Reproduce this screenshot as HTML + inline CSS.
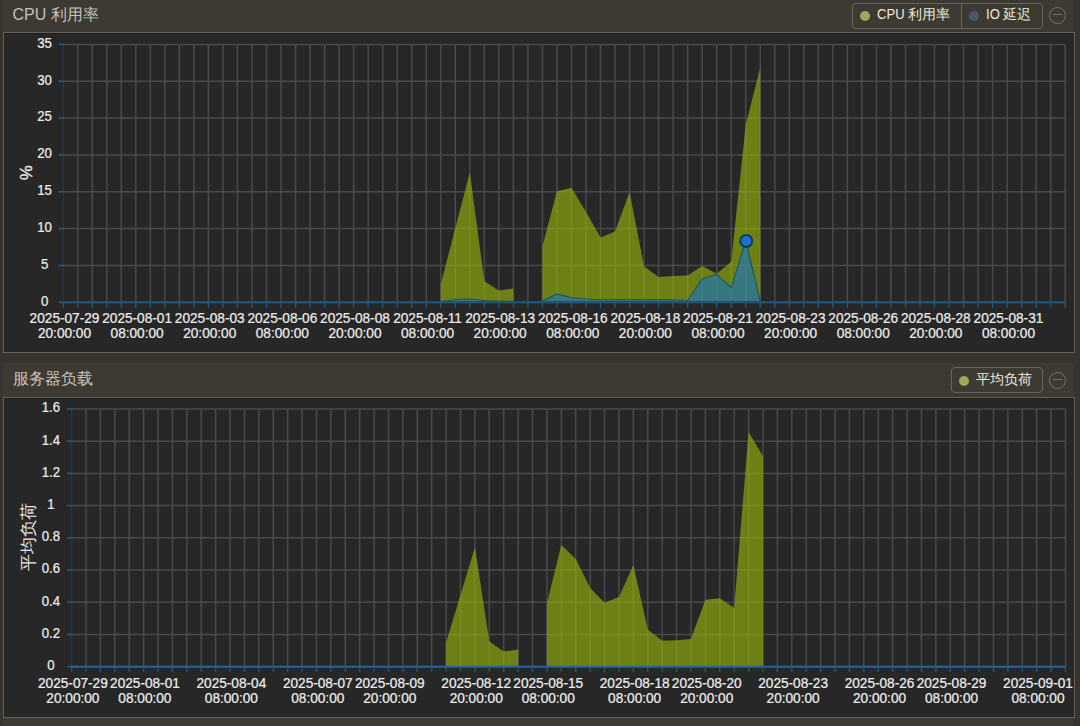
<!DOCTYPE html>
<html><head><meta charset="utf-8">
<style>
html,body{margin:0;padding:0;}
body{width:1080px;height:726px;overflow:hidden;background:#37332e;font-family:"Liberation Sans",sans-serif;position:relative;}
.hdr{position:absolute;left:3px;width:1071px;background:#3d3a34;}
.plot{position:absolute;left:3px;width:1070px;background:#272727;border:1px solid #66615a;box-sizing:content-box;box-shadow:inset 0 1px 0 #201d1b;}
.title{position:absolute;left:12.5px;font-size:16px;color:#c4c1b9;white-space:nowrap;}
.legend{position:absolute;height:24px;border:1px solid #6a645a;border-radius:4px;box-sizing:border-box;}
.li{position:absolute;top:0;height:22px;line-height:22px;font-size:13.5px;color:#f0ead8;white-space:nowrap;}
.dot{position:absolute;width:10px;height:10px;border-radius:50%;top:6px;}
.sep{position:absolute;top:0;width:1px;height:24px;background:#6a645a;}
.lat{display:inline-block;font-size:15px;transform:scaleX(0.87);transform-origin:0 0;}
.minus{position:absolute;width:15px;height:15px;border:1.3px solid #77716a;border-radius:50%;box-sizing:border-box;}
.minus:after{content:"";position:absolute;left:3px;right:3px;top:6px;height:1.3px;background:#77716a;}
svg{position:absolute;left:0;top:0;}
.ax{font-size:15px;fill:#ececec;stroke:#ececec;stroke-width:0.25px;}
.yn{font-size:16.6px;fill:#e6e6e6;}
</style></head><body>
<div class="hdr" style="top:0;height:33px;"></div>
<div class="plot" style="top:32px;height:319px;"></div>
<div class="hdr" style="top:363px;height:35px;"></div>
<div class="plot" style="top:397px;height:319px;"></div>
<div class="hdr" style="top:718px;height:8px;"></div>
<div class="title" style="top:5px;">CPU 利用率</div>
<div class="legend" style="left:852px;top:3px;width:191px;height:26px;">
  <div class="dot" style="left:7px;top:7px;background:#a0a55c;"></div>
  <div class="li" style="left:24px;top:-1px;"><span class="lat" style="margin-right:-4.1px">CPU</span> 利用率</div>
  <div class="sep" style="left:107.6px;"></div>
  <div class="dot" style="left:116.4px;top:7.3px;background:#485769;"></div>
  <div class="li" style="left:132.6px;top:-1px;"><span class="lat" style="margin-right:-2px">IO</span> 延迟</div>
</div>
<div class="minus" style="left:1049px;top:7px;width:17px;height:17px;"></div>
<div class="title" style="top:369px;">服务器负载</div>
<div class="legend" style="left:951px;top:367px;width:92px;height:26px;">
  <div class="dot" style="left:7px;top:8px;background:#a0a55c;"></div>
  <div class="li" style="left:24px;top:1px;">平均负荷</div>
</div>
<div class="minus" style="left:1049px;top:372px;width:17px;height:17px;"></div>
<svg width="1080" height="726" viewBox="0 0 1080 726">
<line x1="77.72" y1="44.4" x2="77.72" y2="302.3" stroke="#4a4a4a" stroke-width="1.5"/>
<line x1="92.24" y1="44.4" x2="92.24" y2="302.3" stroke="#4a4a4a" stroke-width="1.5"/>
<line x1="106.77" y1="44.4" x2="106.77" y2="302.3" stroke="#4a4a4a" stroke-width="1.5"/>
<line x1="121.29" y1="44.4" x2="121.29" y2="302.3" stroke="#4a4a4a" stroke-width="1.5"/>
<line x1="135.81" y1="44.4" x2="135.81" y2="302.3" stroke="#4a4a4a" stroke-width="1.5"/>
<line x1="150.33" y1="44.4" x2="150.33" y2="302.3" stroke="#4a4a4a" stroke-width="1.5"/>
<line x1="164.85" y1="44.4" x2="164.85" y2="302.3" stroke="#4a4a4a" stroke-width="1.5"/>
<line x1="179.38" y1="44.4" x2="179.38" y2="302.3" stroke="#4a4a4a" stroke-width="1.5"/>
<line x1="193.9" y1="44.4" x2="193.9" y2="302.3" stroke="#4a4a4a" stroke-width="1.5"/>
<line x1="208.42" y1="44.4" x2="208.42" y2="302.3" stroke="#4a4a4a" stroke-width="1.5"/>
<line x1="222.94" y1="44.4" x2="222.94" y2="302.3" stroke="#4a4a4a" stroke-width="1.5"/>
<line x1="237.46" y1="44.4" x2="237.46" y2="302.3" stroke="#4a4a4a" stroke-width="1.5"/>
<line x1="251.99" y1="44.4" x2="251.99" y2="302.3" stroke="#4a4a4a" stroke-width="1.5"/>
<line x1="266.51" y1="44.4" x2="266.51" y2="302.3" stroke="#4a4a4a" stroke-width="1.5"/>
<line x1="281.03" y1="44.4" x2="281.03" y2="302.3" stroke="#4a4a4a" stroke-width="1.5"/>
<line x1="295.55" y1="44.4" x2="295.55" y2="302.3" stroke="#4a4a4a" stroke-width="1.5"/>
<line x1="310.07" y1="44.4" x2="310.07" y2="302.3" stroke="#4a4a4a" stroke-width="1.5"/>
<line x1="324.6" y1="44.4" x2="324.6" y2="302.3" stroke="#4a4a4a" stroke-width="1.5"/>
<line x1="339.12" y1="44.4" x2="339.12" y2="302.3" stroke="#4a4a4a" stroke-width="1.5"/>
<line x1="353.64" y1="44.4" x2="353.64" y2="302.3" stroke="#4a4a4a" stroke-width="1.5"/>
<line x1="368.16" y1="44.4" x2="368.16" y2="302.3" stroke="#4a4a4a" stroke-width="1.5"/>
<line x1="382.68" y1="44.4" x2="382.68" y2="302.3" stroke="#4a4a4a" stroke-width="1.5"/>
<line x1="397.21" y1="44.4" x2="397.21" y2="302.3" stroke="#4a4a4a" stroke-width="1.5"/>
<line x1="411.73" y1="44.4" x2="411.73" y2="302.3" stroke="#4a4a4a" stroke-width="1.5"/>
<line x1="426.25" y1="44.4" x2="426.25" y2="302.3" stroke="#4a4a4a" stroke-width="1.5"/>
<line x1="440.77" y1="44.4" x2="440.77" y2="302.3" stroke="#4a4a4a" stroke-width="1.5"/>
<line x1="455.29" y1="44.4" x2="455.29" y2="302.3" stroke="#4a4a4a" stroke-width="1.5"/>
<line x1="469.82" y1="44.4" x2="469.82" y2="302.3" stroke="#4a4a4a" stroke-width="1.5"/>
<line x1="484.34" y1="44.4" x2="484.34" y2="302.3" stroke="#4a4a4a" stroke-width="1.5"/>
<line x1="498.86" y1="44.4" x2="498.86" y2="302.3" stroke="#4a4a4a" stroke-width="1.5"/>
<line x1="513.38" y1="44.4" x2="513.38" y2="302.3" stroke="#4a4a4a" stroke-width="1.5"/>
<line x1="527.9" y1="44.4" x2="527.9" y2="302.3" stroke="#4a4a4a" stroke-width="1.5"/>
<line x1="542.43" y1="44.4" x2="542.43" y2="302.3" stroke="#4a4a4a" stroke-width="1.5"/>
<line x1="556.95" y1="44.4" x2="556.95" y2="302.3" stroke="#4a4a4a" stroke-width="1.5"/>
<line x1="571.47" y1="44.4" x2="571.47" y2="302.3" stroke="#4a4a4a" stroke-width="1.5"/>
<line x1="585.99" y1="44.4" x2="585.99" y2="302.3" stroke="#4a4a4a" stroke-width="1.5"/>
<line x1="600.51" y1="44.4" x2="600.51" y2="302.3" stroke="#4a4a4a" stroke-width="1.5"/>
<line x1="615.04" y1="44.4" x2="615.04" y2="302.3" stroke="#4a4a4a" stroke-width="1.5"/>
<line x1="629.56" y1="44.4" x2="629.56" y2="302.3" stroke="#4a4a4a" stroke-width="1.5"/>
<line x1="644.08" y1="44.4" x2="644.08" y2="302.3" stroke="#4a4a4a" stroke-width="1.5"/>
<line x1="658.6" y1="44.4" x2="658.6" y2="302.3" stroke="#4a4a4a" stroke-width="1.5"/>
<line x1="673.12" y1="44.4" x2="673.12" y2="302.3" stroke="#4a4a4a" stroke-width="1.5"/>
<line x1="687.65" y1="44.4" x2="687.65" y2="302.3" stroke="#4a4a4a" stroke-width="1.5"/>
<line x1="702.17" y1="44.4" x2="702.17" y2="302.3" stroke="#4a4a4a" stroke-width="1.5"/>
<line x1="716.69" y1="44.4" x2="716.69" y2="302.3" stroke="#4a4a4a" stroke-width="1.5"/>
<line x1="731.21" y1="44.4" x2="731.21" y2="302.3" stroke="#4a4a4a" stroke-width="1.5"/>
<line x1="745.73" y1="44.4" x2="745.73" y2="302.3" stroke="#4a4a4a" stroke-width="1.5"/>
<line x1="760.26" y1="44.4" x2="760.26" y2="302.3" stroke="#4a4a4a" stroke-width="1.5"/>
<line x1="774.78" y1="44.4" x2="774.78" y2="302.3" stroke="#4a4a4a" stroke-width="1.5"/>
<line x1="789.3" y1="44.4" x2="789.3" y2="302.3" stroke="#4a4a4a" stroke-width="1.5"/>
<line x1="803.82" y1="44.4" x2="803.82" y2="302.3" stroke="#4a4a4a" stroke-width="1.5"/>
<line x1="818.34" y1="44.4" x2="818.34" y2="302.3" stroke="#4a4a4a" stroke-width="1.5"/>
<line x1="832.87" y1="44.4" x2="832.87" y2="302.3" stroke="#4a4a4a" stroke-width="1.5"/>
<line x1="847.39" y1="44.4" x2="847.39" y2="302.3" stroke="#4a4a4a" stroke-width="1.5"/>
<line x1="861.91" y1="44.4" x2="861.91" y2="302.3" stroke="#4a4a4a" stroke-width="1.5"/>
<line x1="876.43" y1="44.4" x2="876.43" y2="302.3" stroke="#4a4a4a" stroke-width="1.5"/>
<line x1="890.95" y1="44.4" x2="890.95" y2="302.3" stroke="#4a4a4a" stroke-width="1.5"/>
<line x1="905.48" y1="44.4" x2="905.48" y2="302.3" stroke="#4a4a4a" stroke-width="1.5"/>
<line x1="920" y1="44.4" x2="920" y2="302.3" stroke="#4a4a4a" stroke-width="1.5"/>
<line x1="934.52" y1="44.4" x2="934.52" y2="302.3" stroke="#4a4a4a" stroke-width="1.5"/>
<line x1="949.04" y1="44.4" x2="949.04" y2="302.3" stroke="#4a4a4a" stroke-width="1.5"/>
<line x1="963.56" y1="44.4" x2="963.56" y2="302.3" stroke="#4a4a4a" stroke-width="1.5"/>
<line x1="978.09" y1="44.4" x2="978.09" y2="302.3" stroke="#4a4a4a" stroke-width="1.5"/>
<line x1="992.61" y1="44.4" x2="992.61" y2="302.3" stroke="#4a4a4a" stroke-width="1.5"/>
<line x1="1007.13" y1="44.4" x2="1007.13" y2="302.3" stroke="#4a4a4a" stroke-width="1.5"/>
<line x1="1021.65" y1="44.4" x2="1021.65" y2="302.3" stroke="#4a4a4a" stroke-width="1.5"/>
<line x1="1036.17" y1="44.4" x2="1036.17" y2="302.3" stroke="#4a4a4a" stroke-width="1.5"/>
<line x1="1050.7" y1="44.4" x2="1050.7" y2="302.3" stroke="#4a4a4a" stroke-width="1.5"/>
<line x1="1065.22" y1="44.4" x2="1065.22" y2="302.3" stroke="#4a4a4a" stroke-width="1.5"/>
<line x1="63.2" y1="44.4" x2="1065.22" y2="44.4" stroke="#4a4a4a" stroke-width="1.5"/>
<line x1="63.2" y1="81.24" x2="1065.22" y2="81.24" stroke="#4a4a4a" stroke-width="1.5"/>
<line x1="63.2" y1="118.09" x2="1065.22" y2="118.09" stroke="#4a4a4a" stroke-width="1.5"/>
<line x1="63.2" y1="154.93" x2="1065.22" y2="154.93" stroke="#4a4a4a" stroke-width="1.5"/>
<line x1="63.2" y1="191.77" x2="1065.22" y2="191.77" stroke="#4a4a4a" stroke-width="1.5"/>
<line x1="63.2" y1="228.61" x2="1065.22" y2="228.61" stroke="#4a4a4a" stroke-width="1.5"/>
<line x1="63.2" y1="265.46" x2="1065.22" y2="265.46" stroke="#4a4a4a" stroke-width="1.5"/>
<path d="M440.77,302.3 L440.77,284 L455.29,228.3 L469.82,172.5 L484.34,281.3 L498.86,290.6 L513.38,288.5 L513.38,302.3 Z" fill="rgba(148,176,13,0.65)"/>
<path d="M542.43,302.3 L542.43,246.3 L556.95,191.2 L571.47,187.8 L585.99,212 L600.51,237.6 L615.04,231.4 L629.56,192.2 L644.08,266.4 L658.6,277 L673.12,276.1 L687.65,275.6 L702.17,266 L716.69,273.8 L731.21,261.8 L745.73,125 L760.26,67.6 L760.26,302.3 Z" fill="rgba(148,176,13,0.65)"/>
<path d="M440.77,302.3 L440.77,301.5 L455.29,299.5 L469.82,299 L484.34,300.5 L498.86,301.3 L513.38,301.3 L513.38,302.3 Z" fill="rgba(20,115,200,0.6)"/>
<path d="M440.77,301.5 L455.29,299.5 L469.82,299 L484.34,300.5 L498.86,301.3 L513.38,301.3" fill="none" stroke="#1b5560" stroke-width="1.1" stroke-linejoin="round"/>
<path d="M542.43,302.3 L542.43,301 L556.95,293.9 L571.47,297.6 L585.99,299 L600.51,299.8 L615.04,299.8 L629.56,299.8 L644.08,299.8 L658.6,299.8 L673.12,299.8 L687.65,300.5 L702.17,278.9 L716.69,274.3 L731.21,287.7 L745.73,240.6 L760.26,301.5 L760.26,302.3 Z" fill="rgba(20,115,200,0.6)"/>
<path d="M542.43,301 L556.95,293.9 L571.47,297.6 L585.99,299 L600.51,299.8 L615.04,299.8 L629.56,299.8 L644.08,299.8 L658.6,299.8 L673.12,299.8 L687.65,300.5 L702.17,278.9 L716.69,274.3 L731.21,287.7 L745.73,240.6 L760.26,301.5" fill="none" stroke="#1b5560" stroke-width="1.1" stroke-linejoin="round"/>
<line x1="63.2" y1="44.4" x2="63.2" y2="302.3" stroke="#26343f" stroke-width="1.6"/>
<line x1="58.7" y1="44.4" x2="64" y2="44.4" stroke="#245a8c" stroke-width="1.6"/>
<line x1="58.7" y1="81.24" x2="64" y2="81.24" stroke="#245a8c" stroke-width="1.6"/>
<line x1="58.7" y1="118.09" x2="64" y2="118.09" stroke="#245a8c" stroke-width="1.6"/>
<line x1="58.7" y1="154.93" x2="64" y2="154.93" stroke="#245a8c" stroke-width="1.6"/>
<line x1="58.7" y1="191.77" x2="64" y2="191.77" stroke="#245a8c" stroke-width="1.6"/>
<line x1="58.7" y1="228.61" x2="64" y2="228.61" stroke="#245a8c" stroke-width="1.6"/>
<line x1="58.7" y1="265.46" x2="64" y2="265.46" stroke="#245a8c" stroke-width="1.6"/>
<line x1="58.7" y1="302.3" x2="64" y2="302.3" stroke="#245a8c" stroke-width="1.6"/>
<line x1="62.2" y1="302.6" x2="1065.22" y2="302.6" stroke="#143a58" stroke-width="3"/>
<line x1="62.2" y1="302.1" x2="1065.22" y2="302.1" stroke="#2d6282" stroke-width="1.2"/>
<line x1="63.2" y1="302.3" x2="63.2" y2="307.8" stroke="#1f5a85" stroke-width="1.3"/>
<line x1="77.72" y1="302.3" x2="77.72" y2="307.8" stroke="#1f5a85" stroke-width="1.3"/>
<line x1="92.24" y1="302.3" x2="92.24" y2="307.8" stroke="#1f5a85" stroke-width="1.3"/>
<line x1="106.77" y1="302.3" x2="106.77" y2="307.8" stroke="#1f5a85" stroke-width="1.3"/>
<line x1="121.29" y1="302.3" x2="121.29" y2="307.8" stroke="#1f5a85" stroke-width="1.3"/>
<line x1="135.81" y1="302.3" x2="135.81" y2="307.8" stroke="#1f5a85" stroke-width="1.3"/>
<line x1="150.33" y1="302.3" x2="150.33" y2="307.8" stroke="#1f5a85" stroke-width="1.3"/>
<line x1="164.85" y1="302.3" x2="164.85" y2="307.8" stroke="#1f5a85" stroke-width="1.3"/>
<line x1="179.38" y1="302.3" x2="179.38" y2="307.8" stroke="#1f5a85" stroke-width="1.3"/>
<line x1="193.9" y1="302.3" x2="193.9" y2="307.8" stroke="#1f5a85" stroke-width="1.3"/>
<line x1="208.42" y1="302.3" x2="208.42" y2="307.8" stroke="#1f5a85" stroke-width="1.3"/>
<line x1="222.94" y1="302.3" x2="222.94" y2="307.8" stroke="#1f5a85" stroke-width="1.3"/>
<line x1="237.46" y1="302.3" x2="237.46" y2="307.8" stroke="#1f5a85" stroke-width="1.3"/>
<line x1="251.99" y1="302.3" x2="251.99" y2="307.8" stroke="#1f5a85" stroke-width="1.3"/>
<line x1="266.51" y1="302.3" x2="266.51" y2="307.8" stroke="#1f5a85" stroke-width="1.3"/>
<line x1="281.03" y1="302.3" x2="281.03" y2="307.8" stroke="#1f5a85" stroke-width="1.3"/>
<line x1="295.55" y1="302.3" x2="295.55" y2="307.8" stroke="#1f5a85" stroke-width="1.3"/>
<line x1="310.07" y1="302.3" x2="310.07" y2="307.8" stroke="#1f5a85" stroke-width="1.3"/>
<line x1="324.6" y1="302.3" x2="324.6" y2="307.8" stroke="#1f5a85" stroke-width="1.3"/>
<line x1="339.12" y1="302.3" x2="339.12" y2="307.8" stroke="#1f5a85" stroke-width="1.3"/>
<line x1="353.64" y1="302.3" x2="353.64" y2="307.8" stroke="#1f5a85" stroke-width="1.3"/>
<line x1="368.16" y1="302.3" x2="368.16" y2="307.8" stroke="#1f5a85" stroke-width="1.3"/>
<line x1="382.68" y1="302.3" x2="382.68" y2="307.8" stroke="#1f5a85" stroke-width="1.3"/>
<line x1="397.21" y1="302.3" x2="397.21" y2="307.8" stroke="#1f5a85" stroke-width="1.3"/>
<line x1="411.73" y1="302.3" x2="411.73" y2="307.8" stroke="#1f5a85" stroke-width="1.3"/>
<line x1="426.25" y1="302.3" x2="426.25" y2="307.8" stroke="#1f5a85" stroke-width="1.3"/>
<line x1="440.77" y1="302.3" x2="440.77" y2="307.8" stroke="#1f5a85" stroke-width="1.3"/>
<line x1="455.29" y1="302.3" x2="455.29" y2="307.8" stroke="#1f5a85" stroke-width="1.3"/>
<line x1="469.82" y1="302.3" x2="469.82" y2="307.8" stroke="#1f5a85" stroke-width="1.3"/>
<line x1="484.34" y1="302.3" x2="484.34" y2="307.8" stroke="#1f5a85" stroke-width="1.3"/>
<line x1="498.86" y1="302.3" x2="498.86" y2="307.8" stroke="#1f5a85" stroke-width="1.3"/>
<line x1="513.38" y1="302.3" x2="513.38" y2="307.8" stroke="#1f5a85" stroke-width="1.3"/>
<line x1="527.9" y1="302.3" x2="527.9" y2="307.8" stroke="#1f5a85" stroke-width="1.3"/>
<line x1="542.43" y1="302.3" x2="542.43" y2="307.8" stroke="#1f5a85" stroke-width="1.3"/>
<line x1="556.95" y1="302.3" x2="556.95" y2="307.8" stroke="#1f5a85" stroke-width="1.3"/>
<line x1="571.47" y1="302.3" x2="571.47" y2="307.8" stroke="#1f5a85" stroke-width="1.3"/>
<line x1="585.99" y1="302.3" x2="585.99" y2="307.8" stroke="#1f5a85" stroke-width="1.3"/>
<line x1="600.51" y1="302.3" x2="600.51" y2="307.8" stroke="#1f5a85" stroke-width="1.3"/>
<line x1="615.04" y1="302.3" x2="615.04" y2="307.8" stroke="#1f5a85" stroke-width="1.3"/>
<line x1="629.56" y1="302.3" x2="629.56" y2="307.8" stroke="#1f5a85" stroke-width="1.3"/>
<line x1="644.08" y1="302.3" x2="644.08" y2="307.8" stroke="#1f5a85" stroke-width="1.3"/>
<line x1="658.6" y1="302.3" x2="658.6" y2="307.8" stroke="#1f5a85" stroke-width="1.3"/>
<line x1="673.12" y1="302.3" x2="673.12" y2="307.8" stroke="#1f5a85" stroke-width="1.3"/>
<line x1="687.65" y1="302.3" x2="687.65" y2="307.8" stroke="#1f5a85" stroke-width="1.3"/>
<line x1="702.17" y1="302.3" x2="702.17" y2="307.8" stroke="#1f5a85" stroke-width="1.3"/>
<line x1="716.69" y1="302.3" x2="716.69" y2="307.8" stroke="#1f5a85" stroke-width="1.3"/>
<line x1="731.21" y1="302.3" x2="731.21" y2="307.8" stroke="#1f5a85" stroke-width="1.3"/>
<line x1="745.73" y1="302.3" x2="745.73" y2="307.8" stroke="#1f5a85" stroke-width="1.3"/>
<line x1="760.26" y1="302.3" x2="760.26" y2="307.8" stroke="#1f5a85" stroke-width="1.3"/>
<line x1="774.78" y1="302.3" x2="774.78" y2="307.8" stroke="#1f5a85" stroke-width="1.3"/>
<line x1="789.3" y1="302.3" x2="789.3" y2="307.8" stroke="#1f5a85" stroke-width="1.3"/>
<line x1="803.82" y1="302.3" x2="803.82" y2="307.8" stroke="#1f5a85" stroke-width="1.3"/>
<line x1="818.34" y1="302.3" x2="818.34" y2="307.8" stroke="#1f5a85" stroke-width="1.3"/>
<line x1="832.87" y1="302.3" x2="832.87" y2="307.8" stroke="#1f5a85" stroke-width="1.3"/>
<line x1="847.39" y1="302.3" x2="847.39" y2="307.8" stroke="#1f5a85" stroke-width="1.3"/>
<line x1="861.91" y1="302.3" x2="861.91" y2="307.8" stroke="#1f5a85" stroke-width="1.3"/>
<line x1="876.43" y1="302.3" x2="876.43" y2="307.8" stroke="#1f5a85" stroke-width="1.3"/>
<line x1="890.95" y1="302.3" x2="890.95" y2="307.8" stroke="#1f5a85" stroke-width="1.3"/>
<line x1="905.48" y1="302.3" x2="905.48" y2="307.8" stroke="#1f5a85" stroke-width="1.3"/>
<line x1="920" y1="302.3" x2="920" y2="307.8" stroke="#1f5a85" stroke-width="1.3"/>
<line x1="934.52" y1="302.3" x2="934.52" y2="307.8" stroke="#1f5a85" stroke-width="1.3"/>
<line x1="949.04" y1="302.3" x2="949.04" y2="307.8" stroke="#1f5a85" stroke-width="1.3"/>
<line x1="963.56" y1="302.3" x2="963.56" y2="307.8" stroke="#1f5a85" stroke-width="1.3"/>
<line x1="978.09" y1="302.3" x2="978.09" y2="307.8" stroke="#1f5a85" stroke-width="1.3"/>
<line x1="992.61" y1="302.3" x2="992.61" y2="307.8" stroke="#1f5a85" stroke-width="1.3"/>
<line x1="1007.13" y1="302.3" x2="1007.13" y2="307.8" stroke="#1f5a85" stroke-width="1.3"/>
<line x1="1021.65" y1="302.3" x2="1021.65" y2="307.8" stroke="#1f5a85" stroke-width="1.3"/>
<line x1="1036.17" y1="302.3" x2="1036.17" y2="307.8" stroke="#1f5a85" stroke-width="1.3"/>
<line x1="1050.7" y1="302.3" x2="1050.7" y2="307.8" stroke="#1f5a85" stroke-width="1.3"/>
<line x1="1065.22" y1="302.3" x2="1065.22" y2="307.8" stroke="#1f5a85" stroke-width="1.3"/>
<circle cx="746.23" cy="241" r="6" fill="#1f6fd0" stroke="#0c3a55" stroke-width="1.8"/>
<text transform="translate(44.6,47.7) scale(0.88,1)" text-anchor="middle" class="ax">35</text>
<text transform="translate(44.6,84.54) scale(0.88,1)" text-anchor="middle" class="ax">30</text>
<text transform="translate(44.6,121.39) scale(0.88,1)" text-anchor="middle" class="ax">25</text>
<text transform="translate(44.6,158.23) scale(0.88,1)" text-anchor="middle" class="ax">20</text>
<text transform="translate(44.6,195.07) scale(0.88,1)" text-anchor="middle" class="ax">15</text>
<text transform="translate(44.6,231.91) scale(0.88,1)" text-anchor="middle" class="ax">10</text>
<text transform="translate(44.6,268.76) scale(0.88,1)" text-anchor="middle" class="ax">5</text>
<text transform="translate(44.6,305.6) scale(0.88,1)" text-anchor="middle" class="ax">0</text>
<text transform="translate(64.5,323.3) scale(0.91,1)" text-anchor="middle" class="ax">2025-07-29</text>
<text transform="translate(64.5,338.3) scale(0.91,1)" text-anchor="middle" class="ax">20:00:00</text>
<text transform="translate(137.11,323.3) scale(0.91,1)" text-anchor="middle" class="ax">2025-08-01</text>
<text transform="translate(137.11,338.3) scale(0.91,1)" text-anchor="middle" class="ax">08:00:00</text>
<text transform="translate(209.72,323.3) scale(0.91,1)" text-anchor="middle" class="ax">2025-08-03</text>
<text transform="translate(209.72,338.3) scale(0.91,1)" text-anchor="middle" class="ax">20:00:00</text>
<text transform="translate(282.33,323.3) scale(0.91,1)" text-anchor="middle" class="ax">2025-08-06</text>
<text transform="translate(282.33,338.3) scale(0.91,1)" text-anchor="middle" class="ax">08:00:00</text>
<text transform="translate(354.94,323.3) scale(0.91,1)" text-anchor="middle" class="ax">2025-08-08</text>
<text transform="translate(354.94,338.3) scale(0.91,1)" text-anchor="middle" class="ax">20:00:00</text>
<text transform="translate(427.55,323.3) scale(0.91,1)" text-anchor="middle" class="ax">2025-08-11</text>
<text transform="translate(427.55,338.3) scale(0.91,1)" text-anchor="middle" class="ax">08:00:00</text>
<text transform="translate(500.16,323.3) scale(0.91,1)" text-anchor="middle" class="ax">2025-08-13</text>
<text transform="translate(500.16,338.3) scale(0.91,1)" text-anchor="middle" class="ax">20:00:00</text>
<text transform="translate(572.77,323.3) scale(0.91,1)" text-anchor="middle" class="ax">2025-08-16</text>
<text transform="translate(572.77,338.3) scale(0.91,1)" text-anchor="middle" class="ax">08:00:00</text>
<text transform="translate(645.38,323.3) scale(0.91,1)" text-anchor="middle" class="ax">2025-08-18</text>
<text transform="translate(645.38,338.3) scale(0.91,1)" text-anchor="middle" class="ax">20:00:00</text>
<text transform="translate(717.99,323.3) scale(0.91,1)" text-anchor="middle" class="ax">2025-08-21</text>
<text transform="translate(717.99,338.3) scale(0.91,1)" text-anchor="middle" class="ax">08:00:00</text>
<text transform="translate(790.6,323.3) scale(0.91,1)" text-anchor="middle" class="ax">2025-08-23</text>
<text transform="translate(790.6,338.3) scale(0.91,1)" text-anchor="middle" class="ax">20:00:00</text>
<text transform="translate(863.21,323.3) scale(0.91,1)" text-anchor="middle" class="ax">2025-08-26</text>
<text transform="translate(863.21,338.3) scale(0.91,1)" text-anchor="middle" class="ax">08:00:00</text>
<text transform="translate(935.82,323.3) scale(0.91,1)" text-anchor="middle" class="ax">2025-08-28</text>
<text transform="translate(935.82,338.3) scale(0.91,1)" text-anchor="middle" class="ax">20:00:00</text>
<text transform="translate(1008.43,323.3) scale(0.91,1)" text-anchor="middle" class="ax">2025-08-31</text>
<text transform="translate(1008.43,338.3) scale(0.91,1)" text-anchor="middle" class="ax">08:00:00</text>
<text x="32.4" y="172.55" text-anchor="middle" class="yn" style="stroke:#e6e6e6;stroke-width:0.35px" transform="rotate(-90 32.4 172.55)">%</text>
<line x1="86" y1="409" x2="86" y2="666.6" stroke="#4a4a4a" stroke-width="1.5"/>
<line x1="100.41" y1="409" x2="100.41" y2="666.6" stroke="#4a4a4a" stroke-width="1.5"/>
<line x1="114.81" y1="409" x2="114.81" y2="666.6" stroke="#4a4a4a" stroke-width="1.5"/>
<line x1="129.22" y1="409" x2="129.22" y2="666.6" stroke="#4a4a4a" stroke-width="1.5"/>
<line x1="143.62" y1="409" x2="143.62" y2="666.6" stroke="#4a4a4a" stroke-width="1.5"/>
<line x1="158.02" y1="409" x2="158.02" y2="666.6" stroke="#4a4a4a" stroke-width="1.5"/>
<line x1="172.43" y1="409" x2="172.43" y2="666.6" stroke="#4a4a4a" stroke-width="1.5"/>
<line x1="186.83" y1="409" x2="186.83" y2="666.6" stroke="#4a4a4a" stroke-width="1.5"/>
<line x1="201.24" y1="409" x2="201.24" y2="666.6" stroke="#4a4a4a" stroke-width="1.5"/>
<line x1="215.64" y1="409" x2="215.64" y2="666.6" stroke="#4a4a4a" stroke-width="1.5"/>
<line x1="230.04" y1="409" x2="230.04" y2="666.6" stroke="#4a4a4a" stroke-width="1.5"/>
<line x1="244.45" y1="409" x2="244.45" y2="666.6" stroke="#4a4a4a" stroke-width="1.5"/>
<line x1="258.85" y1="409" x2="258.85" y2="666.6" stroke="#4a4a4a" stroke-width="1.5"/>
<line x1="273.26" y1="409" x2="273.26" y2="666.6" stroke="#4a4a4a" stroke-width="1.5"/>
<line x1="287.66" y1="409" x2="287.66" y2="666.6" stroke="#4a4a4a" stroke-width="1.5"/>
<line x1="302.06" y1="409" x2="302.06" y2="666.6" stroke="#4a4a4a" stroke-width="1.5"/>
<line x1="316.47" y1="409" x2="316.47" y2="666.6" stroke="#4a4a4a" stroke-width="1.5"/>
<line x1="330.87" y1="409" x2="330.87" y2="666.6" stroke="#4a4a4a" stroke-width="1.5"/>
<line x1="345.28" y1="409" x2="345.28" y2="666.6" stroke="#4a4a4a" stroke-width="1.5"/>
<line x1="359.68" y1="409" x2="359.68" y2="666.6" stroke="#4a4a4a" stroke-width="1.5"/>
<line x1="374.08" y1="409" x2="374.08" y2="666.6" stroke="#4a4a4a" stroke-width="1.5"/>
<line x1="388.49" y1="409" x2="388.49" y2="666.6" stroke="#4a4a4a" stroke-width="1.5"/>
<line x1="402.89" y1="409" x2="402.89" y2="666.6" stroke="#4a4a4a" stroke-width="1.5"/>
<line x1="417.3" y1="409" x2="417.3" y2="666.6" stroke="#4a4a4a" stroke-width="1.5"/>
<line x1="431.7" y1="409" x2="431.7" y2="666.6" stroke="#4a4a4a" stroke-width="1.5"/>
<line x1="446.1" y1="409" x2="446.1" y2="666.6" stroke="#4a4a4a" stroke-width="1.5"/>
<line x1="460.51" y1="409" x2="460.51" y2="666.6" stroke="#4a4a4a" stroke-width="1.5"/>
<line x1="474.91" y1="409" x2="474.91" y2="666.6" stroke="#4a4a4a" stroke-width="1.5"/>
<line x1="489.32" y1="409" x2="489.32" y2="666.6" stroke="#4a4a4a" stroke-width="1.5"/>
<line x1="503.72" y1="409" x2="503.72" y2="666.6" stroke="#4a4a4a" stroke-width="1.5"/>
<line x1="518.12" y1="409" x2="518.12" y2="666.6" stroke="#4a4a4a" stroke-width="1.5"/>
<line x1="532.53" y1="409" x2="532.53" y2="666.6" stroke="#4a4a4a" stroke-width="1.5"/>
<line x1="546.93" y1="409" x2="546.93" y2="666.6" stroke="#4a4a4a" stroke-width="1.5"/>
<line x1="561.34" y1="409" x2="561.34" y2="666.6" stroke="#4a4a4a" stroke-width="1.5"/>
<line x1="575.74" y1="409" x2="575.74" y2="666.6" stroke="#4a4a4a" stroke-width="1.5"/>
<line x1="590.14" y1="409" x2="590.14" y2="666.6" stroke="#4a4a4a" stroke-width="1.5"/>
<line x1="604.55" y1="409" x2="604.55" y2="666.6" stroke="#4a4a4a" stroke-width="1.5"/>
<line x1="618.95" y1="409" x2="618.95" y2="666.6" stroke="#4a4a4a" stroke-width="1.5"/>
<line x1="633.36" y1="409" x2="633.36" y2="666.6" stroke="#4a4a4a" stroke-width="1.5"/>
<line x1="647.76" y1="409" x2="647.76" y2="666.6" stroke="#4a4a4a" stroke-width="1.5"/>
<line x1="662.16" y1="409" x2="662.16" y2="666.6" stroke="#4a4a4a" stroke-width="1.5"/>
<line x1="676.57" y1="409" x2="676.57" y2="666.6" stroke="#4a4a4a" stroke-width="1.5"/>
<line x1="690.97" y1="409" x2="690.97" y2="666.6" stroke="#4a4a4a" stroke-width="1.5"/>
<line x1="705.38" y1="409" x2="705.38" y2="666.6" stroke="#4a4a4a" stroke-width="1.5"/>
<line x1="719.78" y1="409" x2="719.78" y2="666.6" stroke="#4a4a4a" stroke-width="1.5"/>
<line x1="734.18" y1="409" x2="734.18" y2="666.6" stroke="#4a4a4a" stroke-width="1.5"/>
<line x1="748.59" y1="409" x2="748.59" y2="666.6" stroke="#4a4a4a" stroke-width="1.5"/>
<line x1="762.99" y1="409" x2="762.99" y2="666.6" stroke="#4a4a4a" stroke-width="1.5"/>
<line x1="777.4" y1="409" x2="777.4" y2="666.6" stroke="#4a4a4a" stroke-width="1.5"/>
<line x1="791.8" y1="409" x2="791.8" y2="666.6" stroke="#4a4a4a" stroke-width="1.5"/>
<line x1="806.2" y1="409" x2="806.2" y2="666.6" stroke="#4a4a4a" stroke-width="1.5"/>
<line x1="820.61" y1="409" x2="820.61" y2="666.6" stroke="#4a4a4a" stroke-width="1.5"/>
<line x1="835.01" y1="409" x2="835.01" y2="666.6" stroke="#4a4a4a" stroke-width="1.5"/>
<line x1="849.42" y1="409" x2="849.42" y2="666.6" stroke="#4a4a4a" stroke-width="1.5"/>
<line x1="863.82" y1="409" x2="863.82" y2="666.6" stroke="#4a4a4a" stroke-width="1.5"/>
<line x1="878.22" y1="409" x2="878.22" y2="666.6" stroke="#4a4a4a" stroke-width="1.5"/>
<line x1="892.63" y1="409" x2="892.63" y2="666.6" stroke="#4a4a4a" stroke-width="1.5"/>
<line x1="907.03" y1="409" x2="907.03" y2="666.6" stroke="#4a4a4a" stroke-width="1.5"/>
<line x1="921.44" y1="409" x2="921.44" y2="666.6" stroke="#4a4a4a" stroke-width="1.5"/>
<line x1="935.84" y1="409" x2="935.84" y2="666.6" stroke="#4a4a4a" stroke-width="1.5"/>
<line x1="950.24" y1="409" x2="950.24" y2="666.6" stroke="#4a4a4a" stroke-width="1.5"/>
<line x1="964.65" y1="409" x2="964.65" y2="666.6" stroke="#4a4a4a" stroke-width="1.5"/>
<line x1="979.05" y1="409" x2="979.05" y2="666.6" stroke="#4a4a4a" stroke-width="1.5"/>
<line x1="993.46" y1="409" x2="993.46" y2="666.6" stroke="#4a4a4a" stroke-width="1.5"/>
<line x1="1007.86" y1="409" x2="1007.86" y2="666.6" stroke="#4a4a4a" stroke-width="1.5"/>
<line x1="1022.26" y1="409" x2="1022.26" y2="666.6" stroke="#4a4a4a" stroke-width="1.5"/>
<line x1="1036.67" y1="409" x2="1036.67" y2="666.6" stroke="#4a4a4a" stroke-width="1.5"/>
<line x1="1051.07" y1="409" x2="1051.07" y2="666.6" stroke="#4a4a4a" stroke-width="1.5"/>
<line x1="1065.48" y1="409" x2="1065.48" y2="666.6" stroke="#4a4a4a" stroke-width="1.5"/>
<line x1="71.6" y1="409" x2="1065.48" y2="409" stroke="#4a4a4a" stroke-width="1.5"/>
<line x1="71.6" y1="441.2" x2="1065.48" y2="441.2" stroke="#4a4a4a" stroke-width="1.5"/>
<line x1="71.6" y1="473.4" x2="1065.48" y2="473.4" stroke="#4a4a4a" stroke-width="1.5"/>
<line x1="71.6" y1="505.6" x2="1065.48" y2="505.6" stroke="#4a4a4a" stroke-width="1.5"/>
<line x1="71.6" y1="537.8" x2="1065.48" y2="537.8" stroke="#4a4a4a" stroke-width="1.5"/>
<line x1="71.6" y1="570" x2="1065.48" y2="570" stroke="#4a4a4a" stroke-width="1.5"/>
<line x1="71.6" y1="602.2" x2="1065.48" y2="602.2" stroke="#4a4a4a" stroke-width="1.5"/>
<line x1="71.6" y1="634.4" x2="1065.48" y2="634.4" stroke="#4a4a4a" stroke-width="1.5"/>
<path d="M446.1,666.6 L446.1,642.6 L460.51,595 L474.91,547.6 L489.32,641.6 L503.72,651.5 L518.12,649.4 L518.12,666.6 Z" fill="rgba(148,176,13,0.65)"/>
<path d="M546.93,666.6 L546.93,603.3 L561.34,544.9 L575.74,558.9 L590.14,587.9 L604.55,602.7 L618.95,597.1 L633.36,565.1 L647.76,629.4 L662.16,640.7 L676.57,640.2 L690.97,639 L705.38,599.7 L719.78,598.3 L734.18,607.9 L748.59,432 L762.99,456.2 L762.99,666.6 Z" fill="rgba(148,176,13,0.65)"/>
<line x1="71.6" y1="409" x2="71.6" y2="666.6" stroke="#26343f" stroke-width="1.6"/>
<line x1="67.1" y1="409" x2="72.4" y2="409" stroke="#245a8c" stroke-width="1.6"/>
<line x1="67.1" y1="441.2" x2="72.4" y2="441.2" stroke="#245a8c" stroke-width="1.6"/>
<line x1="67.1" y1="473.4" x2="72.4" y2="473.4" stroke="#245a8c" stroke-width="1.6"/>
<line x1="67.1" y1="505.6" x2="72.4" y2="505.6" stroke="#245a8c" stroke-width="1.6"/>
<line x1="67.1" y1="537.8" x2="72.4" y2="537.8" stroke="#245a8c" stroke-width="1.6"/>
<line x1="67.1" y1="570" x2="72.4" y2="570" stroke="#245a8c" stroke-width="1.6"/>
<line x1="67.1" y1="602.2" x2="72.4" y2="602.2" stroke="#245a8c" stroke-width="1.6"/>
<line x1="67.1" y1="634.4" x2="72.4" y2="634.4" stroke="#245a8c" stroke-width="1.6"/>
<line x1="67.1" y1="666.6" x2="72.4" y2="666.6" stroke="#245a8c" stroke-width="1.6"/>
<line x1="70.6" y1="666.8" x2="1065.48" y2="666.8" stroke="#2466a2" stroke-width="2"/>
<line x1="71.6" y1="666.6" x2="71.6" y2="672.1" stroke="#1f5a85" stroke-width="1.3"/>
<line x1="86" y1="666.6" x2="86" y2="672.1" stroke="#1f5a85" stroke-width="1.3"/>
<line x1="100.41" y1="666.6" x2="100.41" y2="672.1" stroke="#1f5a85" stroke-width="1.3"/>
<line x1="114.81" y1="666.6" x2="114.81" y2="672.1" stroke="#1f5a85" stroke-width="1.3"/>
<line x1="129.22" y1="666.6" x2="129.22" y2="672.1" stroke="#1f5a85" stroke-width="1.3"/>
<line x1="143.62" y1="666.6" x2="143.62" y2="672.1" stroke="#1f5a85" stroke-width="1.3"/>
<line x1="158.02" y1="666.6" x2="158.02" y2="672.1" stroke="#1f5a85" stroke-width="1.3"/>
<line x1="172.43" y1="666.6" x2="172.43" y2="672.1" stroke="#1f5a85" stroke-width="1.3"/>
<line x1="186.83" y1="666.6" x2="186.83" y2="672.1" stroke="#1f5a85" stroke-width="1.3"/>
<line x1="201.24" y1="666.6" x2="201.24" y2="672.1" stroke="#1f5a85" stroke-width="1.3"/>
<line x1="215.64" y1="666.6" x2="215.64" y2="672.1" stroke="#1f5a85" stroke-width="1.3"/>
<line x1="230.04" y1="666.6" x2="230.04" y2="672.1" stroke="#1f5a85" stroke-width="1.3"/>
<line x1="244.45" y1="666.6" x2="244.45" y2="672.1" stroke="#1f5a85" stroke-width="1.3"/>
<line x1="258.85" y1="666.6" x2="258.85" y2="672.1" stroke="#1f5a85" stroke-width="1.3"/>
<line x1="273.26" y1="666.6" x2="273.26" y2="672.1" stroke="#1f5a85" stroke-width="1.3"/>
<line x1="287.66" y1="666.6" x2="287.66" y2="672.1" stroke="#1f5a85" stroke-width="1.3"/>
<line x1="302.06" y1="666.6" x2="302.06" y2="672.1" stroke="#1f5a85" stroke-width="1.3"/>
<line x1="316.47" y1="666.6" x2="316.47" y2="672.1" stroke="#1f5a85" stroke-width="1.3"/>
<line x1="330.87" y1="666.6" x2="330.87" y2="672.1" stroke="#1f5a85" stroke-width="1.3"/>
<line x1="345.28" y1="666.6" x2="345.28" y2="672.1" stroke="#1f5a85" stroke-width="1.3"/>
<line x1="359.68" y1="666.6" x2="359.68" y2="672.1" stroke="#1f5a85" stroke-width="1.3"/>
<line x1="374.08" y1="666.6" x2="374.08" y2="672.1" stroke="#1f5a85" stroke-width="1.3"/>
<line x1="388.49" y1="666.6" x2="388.49" y2="672.1" stroke="#1f5a85" stroke-width="1.3"/>
<line x1="402.89" y1="666.6" x2="402.89" y2="672.1" stroke="#1f5a85" stroke-width="1.3"/>
<line x1="417.3" y1="666.6" x2="417.3" y2="672.1" stroke="#1f5a85" stroke-width="1.3"/>
<line x1="431.7" y1="666.6" x2="431.7" y2="672.1" stroke="#1f5a85" stroke-width="1.3"/>
<line x1="446.1" y1="666.6" x2="446.1" y2="672.1" stroke="#1f5a85" stroke-width="1.3"/>
<line x1="460.51" y1="666.6" x2="460.51" y2="672.1" stroke="#1f5a85" stroke-width="1.3"/>
<line x1="474.91" y1="666.6" x2="474.91" y2="672.1" stroke="#1f5a85" stroke-width="1.3"/>
<line x1="489.32" y1="666.6" x2="489.32" y2="672.1" stroke="#1f5a85" stroke-width="1.3"/>
<line x1="503.72" y1="666.6" x2="503.72" y2="672.1" stroke="#1f5a85" stroke-width="1.3"/>
<line x1="518.12" y1="666.6" x2="518.12" y2="672.1" stroke="#1f5a85" stroke-width="1.3"/>
<line x1="532.53" y1="666.6" x2="532.53" y2="672.1" stroke="#1f5a85" stroke-width="1.3"/>
<line x1="546.93" y1="666.6" x2="546.93" y2="672.1" stroke="#1f5a85" stroke-width="1.3"/>
<line x1="561.34" y1="666.6" x2="561.34" y2="672.1" stroke="#1f5a85" stroke-width="1.3"/>
<line x1="575.74" y1="666.6" x2="575.74" y2="672.1" stroke="#1f5a85" stroke-width="1.3"/>
<line x1="590.14" y1="666.6" x2="590.14" y2="672.1" stroke="#1f5a85" stroke-width="1.3"/>
<line x1="604.55" y1="666.6" x2="604.55" y2="672.1" stroke="#1f5a85" stroke-width="1.3"/>
<line x1="618.95" y1="666.6" x2="618.95" y2="672.1" stroke="#1f5a85" stroke-width="1.3"/>
<line x1="633.36" y1="666.6" x2="633.36" y2="672.1" stroke="#1f5a85" stroke-width="1.3"/>
<line x1="647.76" y1="666.6" x2="647.76" y2="672.1" stroke="#1f5a85" stroke-width="1.3"/>
<line x1="662.16" y1="666.6" x2="662.16" y2="672.1" stroke="#1f5a85" stroke-width="1.3"/>
<line x1="676.57" y1="666.6" x2="676.57" y2="672.1" stroke="#1f5a85" stroke-width="1.3"/>
<line x1="690.97" y1="666.6" x2="690.97" y2="672.1" stroke="#1f5a85" stroke-width="1.3"/>
<line x1="705.38" y1="666.6" x2="705.38" y2="672.1" stroke="#1f5a85" stroke-width="1.3"/>
<line x1="719.78" y1="666.6" x2="719.78" y2="672.1" stroke="#1f5a85" stroke-width="1.3"/>
<line x1="734.18" y1="666.6" x2="734.18" y2="672.1" stroke="#1f5a85" stroke-width="1.3"/>
<line x1="748.59" y1="666.6" x2="748.59" y2="672.1" stroke="#1f5a85" stroke-width="1.3"/>
<line x1="762.99" y1="666.6" x2="762.99" y2="672.1" stroke="#1f5a85" stroke-width="1.3"/>
<line x1="777.4" y1="666.6" x2="777.4" y2="672.1" stroke="#1f5a85" stroke-width="1.3"/>
<line x1="791.8" y1="666.6" x2="791.8" y2="672.1" stroke="#1f5a85" stroke-width="1.3"/>
<line x1="806.2" y1="666.6" x2="806.2" y2="672.1" stroke="#1f5a85" stroke-width="1.3"/>
<line x1="820.61" y1="666.6" x2="820.61" y2="672.1" stroke="#1f5a85" stroke-width="1.3"/>
<line x1="835.01" y1="666.6" x2="835.01" y2="672.1" stroke="#1f5a85" stroke-width="1.3"/>
<line x1="849.42" y1="666.6" x2="849.42" y2="672.1" stroke="#1f5a85" stroke-width="1.3"/>
<line x1="863.82" y1="666.6" x2="863.82" y2="672.1" stroke="#1f5a85" stroke-width="1.3"/>
<line x1="878.22" y1="666.6" x2="878.22" y2="672.1" stroke="#1f5a85" stroke-width="1.3"/>
<line x1="892.63" y1="666.6" x2="892.63" y2="672.1" stroke="#1f5a85" stroke-width="1.3"/>
<line x1="907.03" y1="666.6" x2="907.03" y2="672.1" stroke="#1f5a85" stroke-width="1.3"/>
<line x1="921.44" y1="666.6" x2="921.44" y2="672.1" stroke="#1f5a85" stroke-width="1.3"/>
<line x1="935.84" y1="666.6" x2="935.84" y2="672.1" stroke="#1f5a85" stroke-width="1.3"/>
<line x1="950.24" y1="666.6" x2="950.24" y2="672.1" stroke="#1f5a85" stroke-width="1.3"/>
<line x1="964.65" y1="666.6" x2="964.65" y2="672.1" stroke="#1f5a85" stroke-width="1.3"/>
<line x1="979.05" y1="666.6" x2="979.05" y2="672.1" stroke="#1f5a85" stroke-width="1.3"/>
<line x1="993.46" y1="666.6" x2="993.46" y2="672.1" stroke="#1f5a85" stroke-width="1.3"/>
<line x1="1007.86" y1="666.6" x2="1007.86" y2="672.1" stroke="#1f5a85" stroke-width="1.3"/>
<line x1="1022.26" y1="666.6" x2="1022.26" y2="672.1" stroke="#1f5a85" stroke-width="1.3"/>
<line x1="1036.67" y1="666.6" x2="1036.67" y2="672.1" stroke="#1f5a85" stroke-width="1.3"/>
<line x1="1051.07" y1="666.6" x2="1051.07" y2="672.1" stroke="#1f5a85" stroke-width="1.3"/>
<line x1="1065.48" y1="666.6" x2="1065.48" y2="672.1" stroke="#1f5a85" stroke-width="1.3"/>
<text transform="translate(50.8,412.3) scale(0.88,1)" text-anchor="middle" class="ax">1.6</text>
<text transform="translate(50.8,444.5) scale(0.88,1)" text-anchor="middle" class="ax">1.4</text>
<text transform="translate(50.8,476.7) scale(0.88,1)" text-anchor="middle" class="ax">1.2</text>
<text transform="translate(50.8,508.9) scale(0.88,1)" text-anchor="middle" class="ax">1</text>
<text transform="translate(50.8,541.1) scale(0.88,1)" text-anchor="middle" class="ax">0.8</text>
<text transform="translate(50.8,573.3) scale(0.88,1)" text-anchor="middle" class="ax">0.6</text>
<text transform="translate(50.8,605.5) scale(0.88,1)" text-anchor="middle" class="ax">0.4</text>
<text transform="translate(50.8,637.7) scale(0.88,1)" text-anchor="middle" class="ax">0.2</text>
<text transform="translate(50.8,669.9) scale(0.88,1)" text-anchor="middle" class="ax">0</text>
<text transform="translate(72.9,687.6) scale(0.91,1)" text-anchor="middle" class="ax">2025-07-29</text>
<text transform="translate(72.9,702.6) scale(0.91,1)" text-anchor="middle" class="ax">20:00:00</text>
<text transform="translate(144.92,687.6) scale(0.91,1)" text-anchor="middle" class="ax">2025-08-01</text>
<text transform="translate(144.92,702.6) scale(0.91,1)" text-anchor="middle" class="ax">08:00:00</text>
<text transform="translate(231.34,687.6) scale(0.91,1)" text-anchor="middle" class="ax">2025-08-04</text>
<text transform="translate(231.34,702.6) scale(0.91,1)" text-anchor="middle" class="ax">08:00:00</text>
<text transform="translate(317.77,687.6) scale(0.91,1)" text-anchor="middle" class="ax">2025-08-07</text>
<text transform="translate(317.77,702.6) scale(0.91,1)" text-anchor="middle" class="ax">08:00:00</text>
<text transform="translate(389.79,687.6) scale(0.91,1)" text-anchor="middle" class="ax">2025-08-09</text>
<text transform="translate(389.79,702.6) scale(0.91,1)" text-anchor="middle" class="ax">20:00:00</text>
<text transform="translate(476.21,687.6) scale(0.91,1)" text-anchor="middle" class="ax">2025-08-12</text>
<text transform="translate(476.21,702.6) scale(0.91,1)" text-anchor="middle" class="ax">20:00:00</text>
<text transform="translate(548.23,687.6) scale(0.91,1)" text-anchor="middle" class="ax">2025-08-15</text>
<text transform="translate(548.23,702.6) scale(0.91,1)" text-anchor="middle" class="ax">08:00:00</text>
<text transform="translate(634.66,687.6) scale(0.91,1)" text-anchor="middle" class="ax">2025-08-18</text>
<text transform="translate(634.66,702.6) scale(0.91,1)" text-anchor="middle" class="ax">08:00:00</text>
<text transform="translate(706.68,687.6) scale(0.91,1)" text-anchor="middle" class="ax">2025-08-20</text>
<text transform="translate(706.68,702.6) scale(0.91,1)" text-anchor="middle" class="ax">20:00:00</text>
<text transform="translate(793.1,687.6) scale(0.91,1)" text-anchor="middle" class="ax">2025-08-23</text>
<text transform="translate(793.1,702.6) scale(0.91,1)" text-anchor="middle" class="ax">20:00:00</text>
<text transform="translate(879.52,687.6) scale(0.91,1)" text-anchor="middle" class="ax">2025-08-26</text>
<text transform="translate(879.52,702.6) scale(0.91,1)" text-anchor="middle" class="ax">20:00:00</text>
<text transform="translate(951.54,687.6) scale(0.91,1)" text-anchor="middle" class="ax">2025-08-29</text>
<text transform="translate(951.54,702.6) scale(0.91,1)" text-anchor="middle" class="ax">08:00:00</text>
<text transform="translate(1037.97,687.6) scale(0.91,1)" text-anchor="middle" class="ax">2025-09-01</text>
<text transform="translate(1037.97,702.6) scale(0.91,1)" text-anchor="middle" class="ax">08:00:00</text>
<text x="34" y="537" text-anchor="middle" class="yn" transform="rotate(-90 34 537)">平均负荷</text>
</svg>
</body></html>
